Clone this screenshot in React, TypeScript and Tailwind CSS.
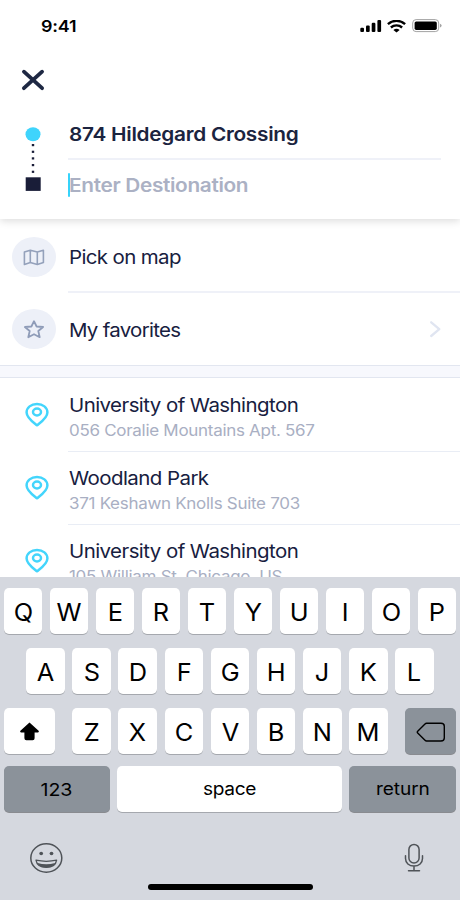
import React from 'react';

interface Place {
    id: number;
    name: string;
    address: string;
}

const places: Place[] = [
    { id: 1, name: 'University of Washington', address: '056 Coralie Mountains Apt. 567' },
    { id: 2, name: 'Woodland Park', address: '371 Keshawn Knolls Suite 703' },
    { id: 3, name: 'University of Washington', address: '105 William St, Chicago, US' },
];

const StatusBar: React.FC = () => (
    <div className="flex h-[52px] items-center justify-between pr-[18px] pl-[41px]">
        <span className="origin-left scale-x-[1.08] text-[16.6px] leading-5 font-semibold tracking-[-0.2px] text-black">9:41</span>
        <div className="flex items-center">
            <svg width="22" height="13" viewBox="0 0 22 13" className="fill-black">
                <rect x="0.3" y="7.8" width="3.7" height="4.3" rx="1.1" />
                <rect x="6" y="5.5" width="3.7" height="6.6" rx="1.1" />
                <rect x="11.7" y="2.8" width="3.7" height="9.3" rx="1.1" />
                <rect x="17.4" y="0" width="3.7" height="12.1" rx="1.1" />
            </svg>
            <svg width="19" height="13" viewBox="0 0 19 13" fill="none" stroke="#000" strokeWidth="2.4" className="ml-[5px]">
                <path d="M0.9 4.1C5.6 -0.2 13.4 -0.2 18.1 4.1" />
                <path d="M3.9 7.5C7 4.7 12 4.7 15.1 7.5" />
                <path d="M6.4 9.9Q9.5 7.4 12.6 9.9L9.5 12.5Z" fill="#000" stroke="none" />
            </svg>
            <svg width="30" height="14" viewBox="0 0 30 14" className="ml-[6px]">
                <rect x="0.7" y="0.6" width="26" height="12" rx="3.4" fill="none" stroke="#a3a3a3" />
                <rect x="2.6" y="2.4" width="22.2" height="8.5" rx="1.6" fill="#000" />
                <path d="M28 4.7Q29.6 5.2 29.6 6.6T28 8.5Z" fill="#a3a3a3" />
            </svg>
        </div>
    </div>
);

const RouteHeader: React.FC = () => (
    <header className="relative z-10 h-[219px] shrink-0 bg-white shadow-[0_2px_8px_rgba(0,0,0,0.14)]">
        <StatusBar />
        <button className="mt-[17px] ml-[21px] block h-[22px] w-6">
            <svg width="24" height="22" viewBox="0 0 24 22" fill="none" stroke="#1e2843" strokeWidth="3.8" strokeLinecap="round">
                <path d="M2.9 2.7L21.1 19.2M21.1 2.7L2.9 19.2" />
            </svg>
        </button>
        <div className="mt-[18px] flex">
            <div className="w-[67.5px] pt-[18px] pl-[25px]">
                <svg width="16" height="65" viewBox="0 0 16 65">
                    <ellipse cx="8" cy="7.2" rx="7.5" ry="7" fill="#3fd4fc" />
                    <g fill="#191d38">
                        <rect x="6.8" y="17" width="2.4" height="2.2" />
                        <rect x="6.8" y="23.7" width="2.4" height="2.2" />
                        <rect x="6.8" y="30.3" width="2.4" height="2.2" />
                        <rect x="6.8" y="37" width="2.4" height="2.2" />
                        <rect x="6.8" y="43.7" width="2.4" height="2.2" />
                        <rect x="0.7" y="50.3" width="15" height="13.6" />
                    </g>
                </svg>
            </div>
            <div className="mr-[19px] flex-1">
                <div className="flex h-[51px] items-center border-b-2 border-[#eff1f8] pt-[4px]">
                    <span className="ml-px origin-left scale-x-[1.107] text-[18.8px] font-semibold tracking-[-0.25px] whitespace-nowrap text-[#1b2440]">874 Hildegard Crossing</span>
                </div>
                <div className="flex h-[50px] items-center">
                    <span className="h-6 w-[2px] rounded-full bg-[#36d3fb]" />
                    <span className="-ml-px origin-left scale-x-[1.107] pt-[2px] text-[18.8px] font-semibold tracking-[-0.3px] whitespace-nowrap text-[#abb1c4]">Enter Destionation</span>
                </div>
            </div>
        </div>
    </header>
);

interface OptionRowProps {
    label: string;
    icon: React.ReactNode;
    chevron?: boolean;
}

const OptionRow: React.FC<OptionRowProps> = ({ label, icon, chevron }) => (
    <div className="flex h-[72px] shrink-0 items-center">
        <div className="ml-3 flex h-10 w-11 items-center justify-center rounded-[50%] bg-[#edf0f8]">{icon}</div>
        <span className={`ml-[13px] origin-left scale-x-[1.09] text-[18.8px] whitespace-nowrap text-[#172040] ${chevron ? 'pt-[5px] tracking-[-0.66px]' : 'pt-[3px] tracking-[-0.58px]'}`}>{label}</span>
        {chevron && (
            <svg width="12" height="18" viewBox="0 0 12 18" fill="none" stroke="#e0e5f1" strokeWidth="2.3" strokeLinecap="round" strokeLinejoin="round" className="mr-[19px] ml-auto">
                <path d="M2.2 2.3L10.3 9.2L2.2 16" />
            </svg>
        )}
    </div>
);

const MapIcon: React.FC = () => (
    <svg width="22" height="18" viewBox="0 0 22 18" fill="none" stroke="#94a1bb" strokeWidth="1.6" strokeLinejoin="round">
        <path d="M1.4 4.1L7.3 2.2L14.3 4.1L20.4 2.2V14.5L14.3 16.4L7.3 14.5L1.4 16.4ZM7.3 2.2V14.5M14.3 4.1V16.4" />
    </svg>
);

const StarIcon: React.FC = () => (
    <svg width="22" height="20" viewBox="0 0 22 20" fill="none" stroke="#8f9cb8" strokeWidth="1.8" strokeLinejoin="round">
        <path d="M11 2.2L13.6 7.5L20.1 8L15.3 12L16.7 18.2L11 15.2L5.3 18.2L6.7 12L1.9 8L8.4 7.5Z" />
    </svg>
);

const PlaceRow: React.FC<{ place: Place }> = ({ place }) => (
    <div className="flex h-[73.2px] shrink-0">
        <div className="w-[67.5px] shrink-0 pt-[24px] pl-[25px]">
            <svg width="24" height="26" viewBox="0 0 24 26" fill="none" stroke="#43d5fc" strokeWidth="2.5" strokeLinejoin="round">
                <path d="M12 23.3C8.7 20.6 1.6 15.8 1.6 10.4C1.6 5.5 6.1 2 12 2S22.4 5.5 22.4 10.4C22.4 15.8 15.3 20.6 12 23.3Z" />
                <ellipse cx="12" cy="10" rx="4" ry="3.4" />
            </svg>
        </div>
        <div className="flex flex-1 flex-col pt-[14.6px] pl-[1.5px] shadow-[0_1px_0_#e9edf5]">
            <span className="origin-left scale-x-[1.09] self-start text-[18.8px] leading-[26px] tracking-[-0.52px] whitespace-nowrap text-[#172040]">{place.name}</span>
            <span className="origin-left scale-x-[1.09] self-start text-[15.6px] leading-[24.6px] tracking-[-0.27px] whitespace-nowrap text-[#a9afc3]">{place.address}</span>
        </div>
    </div>
);

const Key: React.FC<{ letter: string }> = ({ letter }) => (
    <div className="flex h-[46px] w-[38.7px] items-center justify-center rounded-[5px] bg-white pt-[2px] shadow-[0_1px_0_#a5a8ae]">
        <span className="scale-x-[1.04] text-[24.4px] leading-7 text-black">{letter}</span>
    </div>
);

const Keyboard: React.FC = () => (
    <div className="relative z-10 flex h-[323px] shrink-0 flex-col bg-[#d5d8df] pt-[11.4px]">
        <div className="flex justify-between px-[3.7px]">
            {'QWERTYUIOP'.split('').map((letter) => (
                <Key key={letter} letter={letter} />
            ))}
        </div>
        <div className="mt-[14px] flex justify-between px-[26.3px]">
            {'ASDFGHJKL'.split('').map((letter) => (
                <Key key={letter} letter={letter} />
            ))}
        </div>
        <div className="mt-[14px] flex justify-between px-[3.7px]">
            <div className="flex h-[46px] w-[51.5px] items-center justify-center rounded-[5px] bg-white shadow-[0_1px_0_#a5a8ae]">
                <svg width="21" height="19" viewBox="0 0 21 19" className="fill-black">
                    <path d="M10.5 0.5L19.6 8.7Q20.6 10.4 18.8 10.5H15.6V16.3Q15.6 18.3 13.6 18.3H7.4Q5.4 18.3 5.4 16.3V10.5H2.2Q0.4 10.4 1.4 8.7Z" />
                </svg>
            </div>
            <div className="flex w-[315.3px] justify-between">
                {'ZXCVBNM'.split('').map((letter) => (
                    <Key key={letter} letter={letter} />
                ))}
            </div>
            <div className="flex h-[46px] w-[51.5px] items-center justify-center rounded-[5px] bg-[#8b929a] pt-[2px] shadow-[0_1px_0_#898b90]">
                <svg width="30" height="21" viewBox="0 0 30 21" fill="none" stroke="#000" strokeWidth="1.4" strokeLinejoin="round">
                    <path d="M10.5 1.3H25Q28.3 1.3 28.3 4.3V16Q28.3 19 25 19H10.5Q9.7 19 9 18.3L1.7 11.1Q0.8 10.1 1.7 9.2L9 2Q9.7 1.3 10.5 1.3Z" />
                </svg>
            </div>
        </div>
        <div className="mt-[12px] flex justify-between px-[3.7px]">
            <div className="flex h-[46px] w-[106.5px] items-center justify-center rounded-[5px] bg-[#8b929a] shadow-[0_1px_0_#898b90]">
                <span className="scale-x-[1.107] pt-px text-[17.7px] text-black">123</span>
            </div>
            <div className="flex h-[46px] w-[225.5px] items-center justify-center rounded-[5px] bg-white shadow-[0_1px_0_#a5a8ae]">
                <span className="scale-x-[1.08] text-[17.7px] tracking-[-0.3px] text-black">space</span>
            </div>
            <div className="flex h-[46px] w-[107.5px] items-center justify-center rounded-[5px] bg-[#8b929a] shadow-[0_1px_0_#898b90]">
                <span className="scale-x-[1.08] pb-px text-[17.7px] tracking-[-0.1px] text-black">return</span>
            </div>
        </div>
        <div className="mt-[29.6px] flex items-center justify-between pr-[36px] pl-[29px]">
            <svg width="34" height="32" viewBox="0 0 34 32" fill="none" stroke="#4f5358" strokeWidth="1.5">
                <ellipse cx="17.3" cy="16" rx="15.5" ry="14.2" />
                <ellipse cx="12.2" cy="11.5" rx="1.9" ry="1.7" fill="#4f5358" stroke="none" />
                <ellipse cx="22.5" cy="11.5" rx="1.9" ry="1.7" fill="#4f5358" stroke="none" />
                <path d="M7 18.2Q17.3 20.4 27.6 18.2Q26.5 25.4 17.3 25.4T7 18.2Z" strokeWidth="1.3" strokeLinejoin="round" />
                <path d="M8.5 21Q17.3 23.6 26.1 21Q24 25.6 17.3 25.6T8.5 21Z" fill="#4f5358" stroke="none" />
            </svg>
            <svg width="20" height="30" viewBox="0 0 20 30" fill="none" stroke="#4f5358" strokeWidth="1.5" strokeLinecap="round">
                <rect x="4.9" y="1.4" width="10.2" height="18.6" rx="5.1" />
                <path d="M1.5 12.8V15.6C1.5 20 5 23 10 23S18.5 20 18.5 15.6V12.8M10 23V27.7M4.5 27.7H15.5" />
            </svg>
        </div>
        <div className="mt-auto mb-[10px] ml-[148px] h-[6px] w-[165px] rounded-full bg-black" />
    </div>
);

const App: React.FC = () => {
    return (
        <div className="flex h-[900px] w-[460px] flex-col overflow-hidden bg-white font-['Inter',sans-serif]">
            <RouteHeader />
            <main className="flex h-[358px] flex-col overflow-hidden pt-[2px]">
                <OptionRow label="Pick on map" icon={<MapIcon />} />
                <div className="-mt-[2px] ml-[67.5px] h-[2px] shrink-0 bg-[#eff1f8]" />
                <OptionRow label="My favorites" icon={<StarIcon />} chevron />
                <div className="h-[13px] shrink-0 border-y border-[#e2e6f0] bg-[#f7f8fd]" />
                {places.map((place) => (
                    <PlaceRow key={place.id} place={place} />
                ))}
            </main>
            <Keyboard />
        </div>
    );
};

export default App;
